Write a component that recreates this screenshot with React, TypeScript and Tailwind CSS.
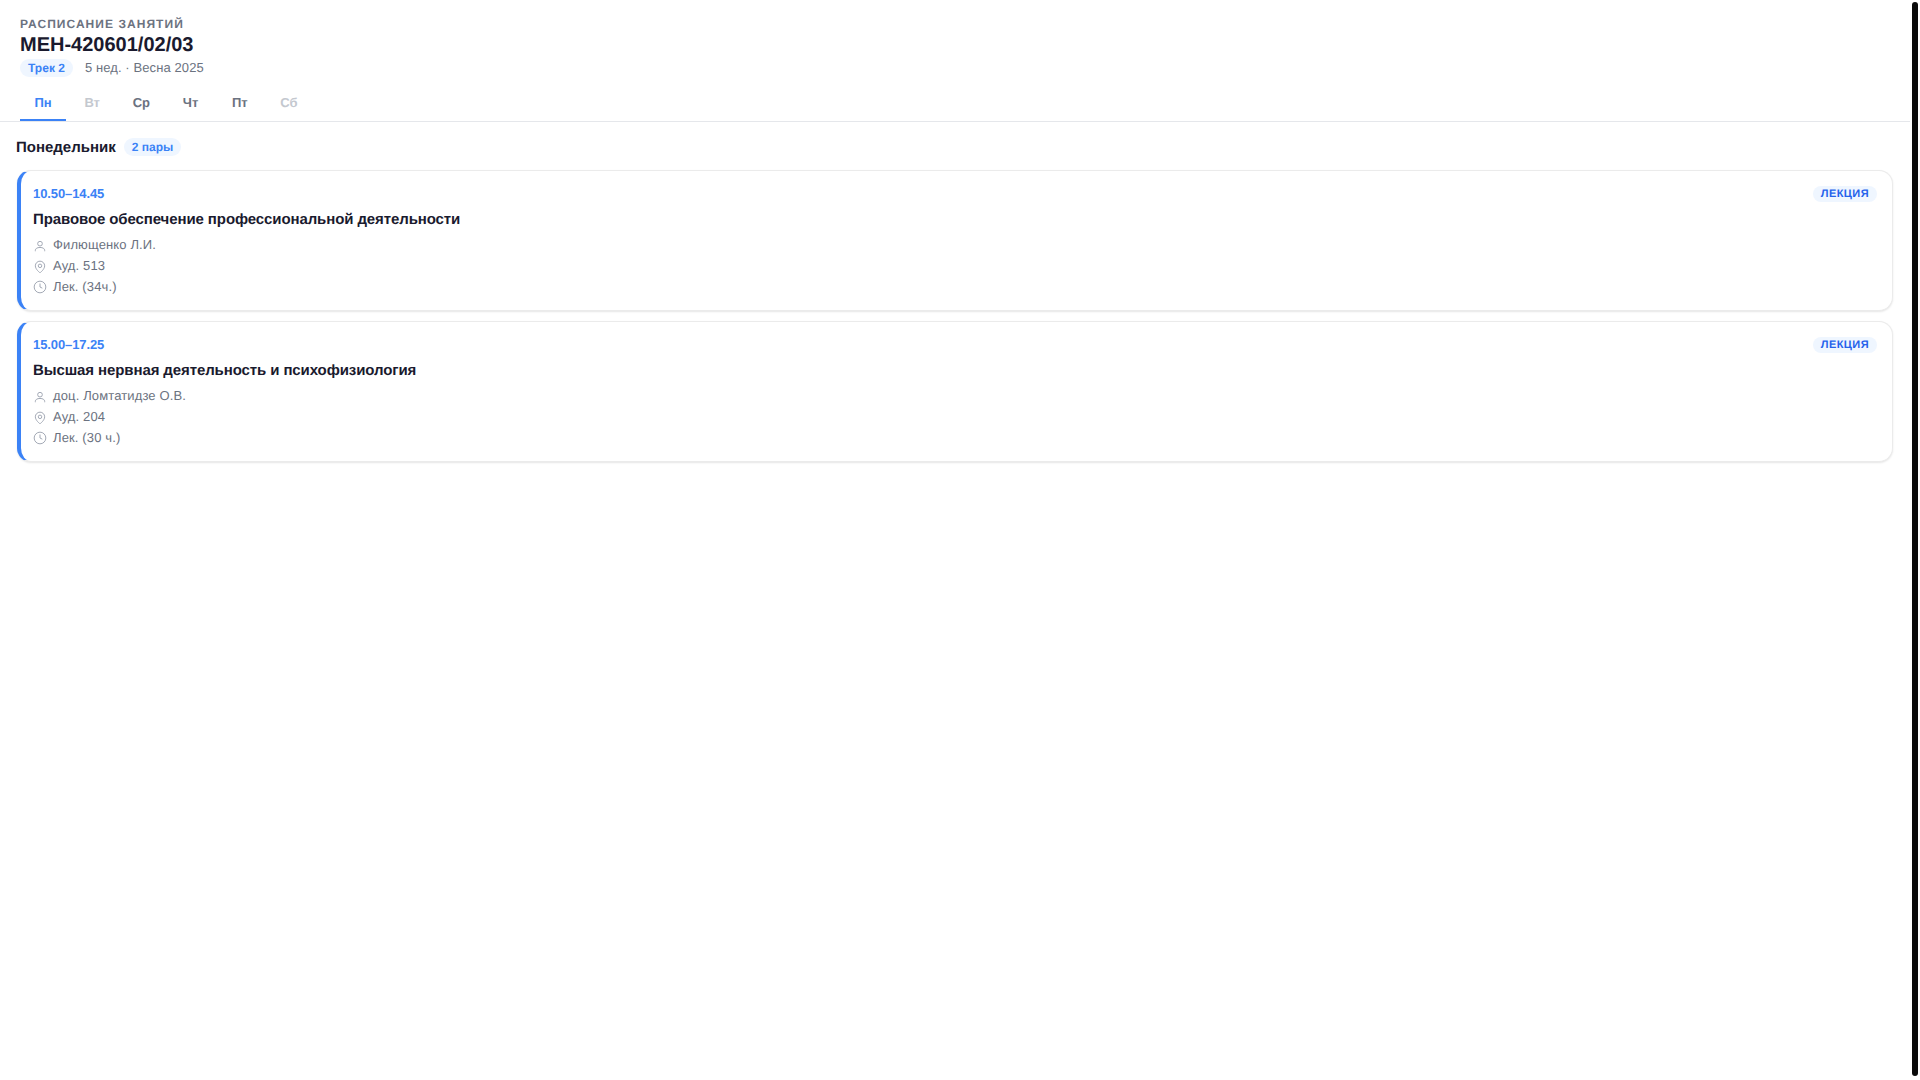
import React from 'react';

const days = [
    { label: 'Пн', active: true },
    { label: 'Вт', muted: true },
    { label: 'Ср' },
    { label: 'Чт' },
    { label: 'Пт' },
    { label: 'Сб', muted: true },
];

const lessons = [
    {
        time: '10.50–14.45',
        title: 'Правовое обеспечение профессиональной деятельности',
        teacher: 'Филющенко Л.И.',
        room: 'Ауд. 513',
        hours: 'Лек. (34ч.)',
    },
    {
        time: '15.00–17.25',
        title: 'Высшая нервная деятельность и психофизиология',
        teacher: 'доц. Ломтатидзе О.В.',
        room: 'Ауд. 204',
        hours: 'Лек. (30 ч.)',
    },
];

const UserIcon = () => (
    <svg viewBox="0 0 24 24" fill="none" stroke="#9ca3af" strokeWidth="1.6" className="w-[14px] h-[14px] shrink-0 mt-[3px]">
        <circle cx="12" cy="8" r="4" />
        <path d="M4 21v-1.5c0-3 3-5 8-5s8 2 8 5V21" />
    </svg>
);

const PinIcon = () => (
    <svg viewBox="0 0 24 24" fill="none" stroke="#9ca3af" strokeWidth="1.6" className="w-[14px] h-[14px] shrink-0 mt-[3px]">
        <path d="M20 10c0 6-8 12-8 12s-8-6-8-12a8 8 0 0 1 16 0z" />
        <circle cx="12" cy="10" r="3" />
    </svg>
);

const ClockIcon = () => (
    <svg viewBox="0 0 24 24" fill="none" stroke="#9ca3af" strokeWidth="1.6" className="w-[14px] h-[14px] shrink-0 mt-[1px]">
        <circle cx="12" cy="12" r="10" />
        <path d="M12 6v6l4 2" />
    </svg>
);

const InfoRow = ({ icon, text }: { icon: React.ReactNode; text: string }) => (
    <div className="flex items-center gap-[6px] h-[21px] text-[13px] tracking-[0.13px] text-[#6b7280]">
        {icon}
        <span>{text}</span>
    </div>
);

export default function App() {
    return (
        <div className="relative h-[1080px] bg-white overflow-hidden font-['Liberation_Sans',Arial,sans-serif] [text-rendering:geometricPrecision]">
            <div className="w-[1910px]">
                <header className="border-b border-[#e5e7eb] px-5 pt-[17px]">
                    <p className="text-[12px] leading-[15px] font-bold tracking-[1.05px] text-[#6b7280]">РАСПИСАНИЕ ЗАНЯТИЙ</p>
                    <h1 className="text-[20px] leading-[26px] font-bold text-[#1a1a2e]">МЕН-420601/02/03</h1>
                    <div className="flex items-center gap-3 mt-[1px] h-[18px]">
                        <span className="flex items-center h-[18px] px-[8px] rounded-[10px] bg-[#eff6ff] text-[12px] font-bold text-[#3b82f6]">Трек 2</span>
                        <span className="text-[13px] tracking-[0.1px] text-[#6b7280]">5 нед. · Весна 2025</span>
                    </div>
                    <nav className="flex gap-[3.2px] mt-[9px]">
                        {days.map((day) => (
                            <div
                                key={day.label}
                                className={`w-[46px] h-[35px] pt-px flex items-center justify-center text-[13px] font-bold border-b-2 ${
                                    day.active
                                        ? 'border-[#3b82f6] text-[#3b82f6]'
                                        : day.muted
                                          ? 'border-transparent text-[#c4c8cf]'
                                          : 'border-transparent text-[#6b7280]'
                                }`}
                            >
                                {day.label}
                            </div>
                        ))}
                    </nav>
                </header>

                <main className="pl-4 pr-[17px] pt-4">
                    <div className="flex items-center gap-2 h-[18px]">
                        <h2 className="mt-[2px] text-[15px] font-bold text-[#1a1a2e]">Понедельник</h2>
                        <span className="flex items-center h-[18px] px-2 rounded-[10px] bg-[#eff6ff] text-[12px] font-bold text-[#3b82f6]">2 пары</span>
                    </div>

                    <div className="flex flex-col gap-[10px] mt-[14px]">
                        {lessons.map((lesson) => (
                            <div
                                key={lesson.time}
                                className="ml-px h-[141px] rounded-[14px] border border-[#ebebeb] border-l-4 border-l-[#3b82f6] bg-white pl-[12px] pr-[15px] pt-[15px] shadow-[0_1px_2px_rgba(0,0,0,0.1)]"
                            >
                                <div className="flex items-center justify-between h-[16px]">
                                    <span className="text-[13px] tracking-[-0.1px] font-bold text-[#3b82f6]">{lesson.time}</span>
                                    <span className="flex items-center h-[16px] px-2 rounded-[8px] bg-[#eff6ff] text-[11px] font-bold tracking-[0.44px] text-[#2563eb]">ЛЕКЦИЯ</span>
                                </div>
                                <h3 className="mt-[8px] text-[15px] leading-[20px] tracking-[-0.1px] font-bold text-[#1a1a2e]">{lesson.title}</h3>
                                <div className="mt-[4px]">
                                    <InfoRow icon={<UserIcon />} text={lesson.teacher} />
                                    <InfoRow icon={<PinIcon />} text={lesson.room} />
                                    <InfoRow icon={<ClockIcon />} text={lesson.hours} />
                                </div>
                            </div>
                        ))}
                    </div>
                </main>
            </div>

            {/* scroll indicator on the right edge */}
            <div className="absolute right-[2px] top-[2px] bottom-[4px] w-[6px] rounded-[3px] bg-[#0a0a0a]" />
        </div>
    );
}
